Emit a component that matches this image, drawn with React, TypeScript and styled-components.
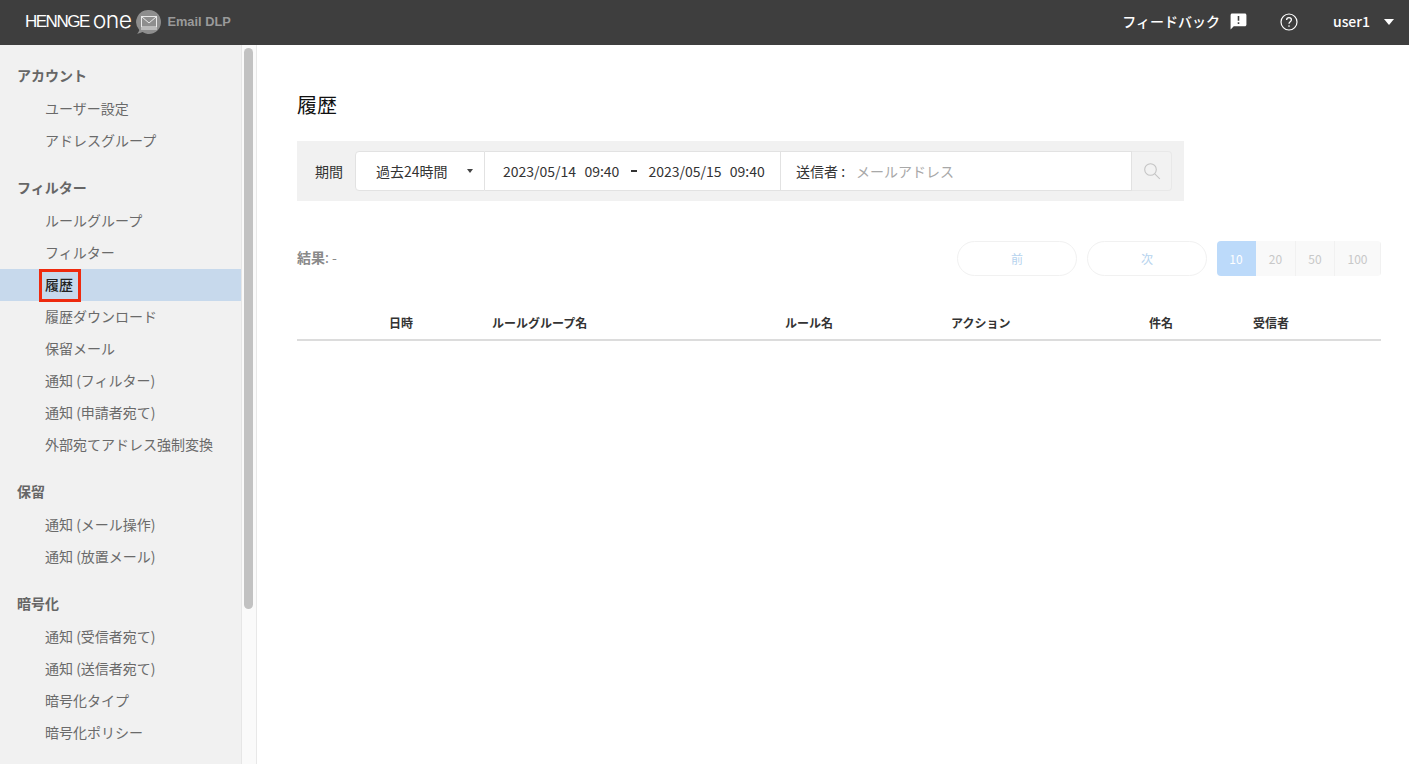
import React from 'react';
import styled, { createGlobalStyle } from 'styled-components';
import { MdAnnouncement } from 'react-icons/md';

const GlobalStyle = createGlobalStyle`
    html, body {
        margin: 0;
        height: 100%;
        overflow: hidden;
        background: #fff;
        font-family: "Noto Sans CJK JP", "Noto Sans", sans-serif;
        color: #222;
    }
    * {
        box-sizing: border-box;
    }
`;

const Page = styled.div`
    display: flex;
    flex-direction: column;
    height: 764px;
`;

const Header = styled.header`
    flex: 0 0 45px;
    display: flex;
    align-items: center;
    background: #3e3e3e;
    padding: 0 15px 2px 25px;
    color: #fff;
`;

const Logo = styled.div`
    display: flex;
    align-items: center;
    flex: 1;
`;

const LogoWord = styled.span`
    font-family: "Liberation Sans", sans-serif;
    font-size: 17px;
    letter-spacing: -1.5px;
    line-height: 1;
`;

const LogoOne = styled.span`
    font-family: "Inter", sans-serif;
    font-size: 23px;
    font-weight: 300;
    letter-spacing: -0.6px;
    line-height: 1;
    margin-left: 4px;
    position: relative;
    top: -1px;
`;

const ProductName = styled.span`
    font-family: "Liberation Sans", sans-serif;
    font-size: 12.8px;
    font-weight: 700;
    color: #9a9a9a;
    margin-left: 5px;
`;

const HeaderLabel = styled.span`
    font-size: 14px;
    font-weight: 500;
    position: relative;
    top: -1px;
`;

const FeedbackIcon = styled(MdAnnouncement)`
    width: 19px;
    height: 19px;
    margin-left: 9px;
`;

const HelpIcon = styled.svg`
    width: 20px;
    height: 20px;
    margin: 0 34px 0 31px;
`;

const Caret = styled.span`
    width: 0;
    height: 0;
    border-left: 5px solid transparent;
    border-right: 5px solid transparent;
    border-top: 6px solid #fff;
    margin-left: 14px;
`;

const Body = styled.div`
    flex: 1;
    display: flex;
    min-height: 0;
`;

const Sidebar = styled.nav`
    flex: 0 0 242px;
    background: #f1f1f1;
    border-right: 1px solid #e6e6e6;
    padding-top: 12px;
    overflow: hidden;
`;

const ScrollTrack = styled.div`
    flex: 0 0 15px;
    background: #fafafa;
    border-right: 1px solid #e8e8e8;
    padding: 3px 3px 0 2px;
`;

const ScrollThumb = styled.div`
    width: 9px;
    height: 561px;
    border-radius: 5px;
    background: #c2c2c2;
`;

const Group = styled.section`
    margin-bottom: 12px;
`;

const GroupTitle = styled.div`
    height: 36px;
    line-height: 36px;
    padding-left: 17px;
    font-size: 14px;
    font-weight: 700;
    color: #666;
`;

const Item = styled.div<{ $active?: boolean }>`
    position: relative;
    height: 32px;
    line-height: 30px;
    padding-left: 45px;
    font-size: 14px;
    color: ${(p) => (p.$active ? '#222' : '#6a6a6a')};
    font-weight: ${(p) => (p.$active ? 500 : 400)};
    background: ${(p) => (p.$active ? '#c7d9ec' : 'transparent')};
`;

const Highlight = styled.span`
    position: absolute;
    left: 39px;
    top: 0;
    width: 42px;
    height: 33px;
    border: 3px solid #ee2a0e;
`;

const Main = styled.main`
    flex: 1;
    padding: 45px 28px 0 40px;
    min-width: 0;
`;

const Title = styled.h1`
    margin: 0 0 21px;
    font-size: 20px;
    line-height: 30px;
    font-weight: 400;
    color: #111;
`;

const SearchBar = styled.div`
    display: flex;
    align-items: center;
    width: 887px;
    height: 60px;
    background: #f1f1f1;
    padding: 0 12px 0 18px;
`;

const PeriodLabel = styled.span`
    flex: 0 0 40px;
    font-size: 14px;
    color: #333;
`;

const Field = styled.div<{ $width: number; $rounded?: boolean }>`
    flex: 0 0 ${(p) => p.$width}px;
    height: 40px;
    display: flex;
    align-items: center;
    background: #fff;
    border: 1px solid #e2e2e2;
    border-left-width: ${(p) => (p.$rounded ? 1 : 0)}px;
    border-radius: ${(p) => (p.$rounded ? '4px 0 0 4px' : 0)};
    font-size: 14px;
    color: #333;
`;

const SelectField = styled(Field)`
    padding-left: 20px;
`;

const SelectCaret = styled.span`
    width: 0;
    height: 0;
    margin-left: 19px;
    border-left: 3px solid transparent;
    border-right: 3px solid transparent;
    border-top: 4px solid #444;
`;

const DateField = styled(Field)`
    padding-left: 18px;
    white-space: pre;
    word-spacing: 1px;
`;

const DateDash = styled.span`
    width: 6px;
    height: 2px;
    margin: 0 11px 0 12px;
    background: #333;
`;

const SenderField = styled(Field)`
    padding-left: 15px;
`;

const Placeholder = styled.span`
    margin-left: 11px;
    color: #a8a8a8;
`;

const SearchButton = styled.div`
    flex: 0 0 40px;
    height: 40px;
    display: flex;
    align-items: center;
    justify-content: center;
    background: #f2f2f2;
    border: 1px solid #e8e8e8;
    border-left: 0;
    border-radius: 0 4px 4px 0;
`;

const SearchIcon = styled.svg`
    width: 18px;
    height: 18px;
`;

const ResultRow = styled.div`
    display: flex;
    align-items: center;
    height: 35px;
    margin-top: 40px;
`;

const ResultText = styled.div`
    flex: 1;
    font-size: 14px;
    line-height: 32px;
    height: 35px;
    color: #8a8a8a;
`;

const ResultLabel = styled.span`
    font-weight: 700;
`;

const PageButton = styled.div`
    width: 120px;
    height: 35px;
    margin-right: 10px;
    display: flex;
    align-items: center;
    justify-content: center;
    border: 1px solid #f1f1f1;
    border-radius: 18px;
    font-size: 12px;
    color: #b6d3ee;
`;

const SizeGroup = styled.div`
    display: flex;
    height: 35px;
    border-radius: 4px;
    overflow: hidden;
`;

const SizeOption = styled.div<{ $width: number; $active?: boolean }>`
    width: ${(p) => p.$width}px;
    display: flex;
    align-items: center;
    justify-content: center;
    font-size: 12px;
    color: ${(p) => (p.$active ? '#fff' : '#c8c8c8')};
    background: ${(p) => (p.$active ? '#bcdafa' : '#f9f9f9')};
    border-right: 1px solid ${(p) => (p.$active ? '#bcdafa' : '#f1f1f1')};
`;

const TableHead = styled.div`
    display: grid;
    grid-template-columns: 103px 293px 166px 198px 104px 1fr;
    height: 32px;
    margin-top: 33px;
    padding-left: 92px;
    border-bottom: 2px solid #dcdcdc;
    font-size: 12px;
    font-weight: 700;
    line-height: 28px;
    color: #333;
`;

const sections = [
    { title: 'アカウント', items: ['ユーザー設定', 'アドレスグループ'] },
    {
        title: 'フィルター',
        items: [
            'ルールグループ',
            'フィルター',
            '履歴',
            '履歴ダウンロード',
            '保留メール',
            '通知 (フィルター)',
            '通知 (申請者宛て)',
            '外部宛てアドレス強制変換',
        ],
    },
    { title: '保留', items: ['通知 (メール操作)', '通知 (放置メール)'] },
    { title: '暗号化', items: ['通知 (受信者宛て)', '通知 (送信者宛て)', '暗号化タイプ', '暗号化ポリシー'] },
];

const columns = ['日時', 'ルールグループ名', 'ルール名', 'アクション', '件名', '受信者'];

const sizes = [
    { label: '10', width: 39, active: true },
    { label: '20', width: 40 },
    { label: '50', width: 39 },
    { label: '100', width: 46 },
];

const MailMark: React.FC = () => (
    <svg width="26" height="26" viewBox="0 0 26 26" style={{ marginLeft: 5 }}>
        <path d="M13 1a12 12 0 1 1-6.5 22.1C5 24 3.2 24.6 0.8 24.6c1.4-.8 2.2-2 2.5-3.6A12 12 0 0 1 13 1z" fill="#8e8e8e" />
        <rect x="5.5" y="7.5" width="15" height="10.5" fill="none" stroke="#e8e8e8" strokeWidth="1" />
        <path d="M6 8l7 6 7-6" fill="none" stroke="#e8e8e8" strokeWidth="1" />
        <path d="M5 20h16" stroke="#e8e8e8" strokeWidth="1" />
    </svg>
);

const App: React.FC = () => {
    return (
        <Page>
            <GlobalStyle />
            <Header>
                <Logo>
                    <LogoWord>HENNGE</LogoWord>
                    <LogoOne>one</LogoOne>
                    <MailMark />
                    <ProductName>Email DLP</ProductName>
                </Logo>
                <HeaderLabel>フィードバック</HeaderLabel>
                <FeedbackIcon />
                <HelpIcon viewBox="0 0 20 20" fill="none" stroke="#fff">
                    <circle cx="10" cy="10" r="8" strokeWidth="1.2" />
                    <path d="M7.6 8c0-1.5 1.1-2.4 2.4-2.4s2.4.9 2.4 2.2c0 1.9-2.4 1.9-2.4 3.9" strokeWidth="1.3" />
                    <circle cx="10" cy="14.1" r=".8" fill="#fff" stroke="none" />
                </HelpIcon>
                <HeaderLabel>user1</HeaderLabel>
                <Caret />
            </Header>
            <Body>
                <Sidebar>
                    {sections.map((section) => (
                        <Group key={section.title}>
                            <GroupTitle>{section.title}</GroupTitle>
                            {section.items.map((item) => (
                                <Item key={item} $active={item === '履歴'}>
                                    {item}
                                    {item === '履歴' && <Highlight />}
                                </Item>
                            ))}
                        </Group>
                    ))}
                </Sidebar>
                <ScrollTrack>
                    <ScrollThumb />
                </ScrollTrack>
                <Main>
                    <Title>履歴</Title>
                    <SearchBar>
                        <PeriodLabel>期間</PeriodLabel>
                        <SelectField $width={130} $rounded>
                            過去24時間
                            <SelectCaret />
                        </SelectField>
                        <DateField $width={296}>
                            2023/05/14{'  '}09:40
                            <DateDash />
                            2023/05/15{'  '}09:40
                        </DateField>
                        <SenderField $width={351}>
                            送信者 :
                            <Placeholder>メールアドレス</Placeholder>
                        </SenderField>
                        <SearchButton>
                            <SearchIcon viewBox="0 0 18 18" fill="none" stroke="#c4c4c4" strokeWidth="1.1">
                                <circle cx="7.5" cy="7.5" r="5.8" />
                                <path d="M11.8 11.8l5 5" />
                            </SearchIcon>
                        </SearchButton>
                    </SearchBar>
                    <ResultRow>
                        <ResultText>
                            <ResultLabel>結果</ResultLabel>: -
                        </ResultText>
                        <PageButton>前</PageButton>
                        <PageButton>次</PageButton>
                        <SizeGroup>
                            {sizes.map((size) => (
                                <SizeOption key={size.label} $width={size.width} $active={size.active}>
                                    {size.label}
                                </SizeOption>
                            ))}
                        </SizeGroup>
                    </ResultRow>
                    <TableHead>
                        {columns.map((col) => (
                            <span key={col}>{col}</span>
                        ))}
                    </TableHead>
                </Main>
            </Body>
        </Page>
    );
};

export default App;
